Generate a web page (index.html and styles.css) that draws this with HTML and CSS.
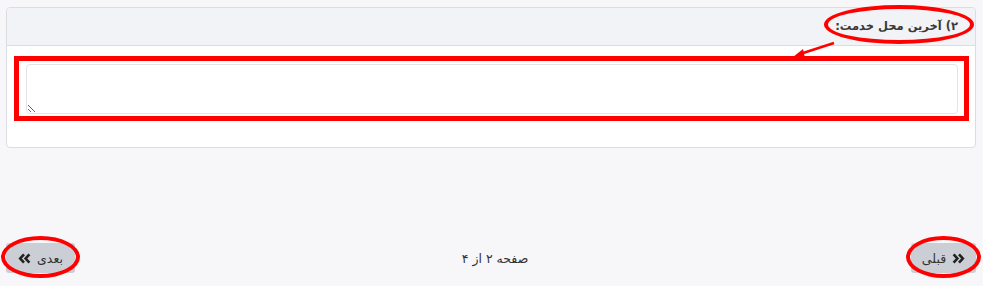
FILE: index.html
```html
<!DOCTYPE html>
<html lang="fa" dir="rtl">
<head>
<meta charset="utf-8">
<link rel="stylesheet" href="styles.css">
</head>
<body>
<div class="page">
  <div class="card">
    <div class="card-header">
      <span class="title">۲) آخرین محل خدمت:</span>
      <span class="ring ring-title"></span>
      <svg class="arrow" width="50" height="22" viewBox="0 0 50 22"><line x1="44" y1="4" x2="10" y2="15" stroke="#ff0000" stroke-width="2.5"/><polygon points="3,18 13,10 15,19" fill="#ff0000"/></svg>
    </div>
    <div class="card-body">
      <div class="highlight">
        <textarea class="field"></textarea>
      </div>
    </div>
  </div>
  <div class="footer">
    <button class="btn btn-prev">
      <svg class="chev" width="13" height="11" viewBox="0 0 13 11"><path d="M1.6 1.3 L5.4 5.5 L1.6 9.7 M7 1.3 L10.8 5.5 L7 9.7" fill="none" stroke="#222" stroke-width="2.6"/></svg>
      <span>قبلی</span>
      <span class="ring ring-btn"></span>
    </button>
    <span class="pager">صفحه ۲ از ۴</span>
    <button class="btn btn-next">
      <span>بعدی</span>
      <svg class="chev" width="13" height="11" viewBox="0 0 13 11"><path d="M11.4 1.3 L7.6 5.5 L11.4 9.7 M6 1.3 L2.2 5.5 L6 9.7" fill="none" stroke="#222" stroke-width="2.6"/></svg>
      <span class="ring ring-btn"></span>
    </button>
  </div>
</div>
</body>
</html>
```
FILE: styles.css
```css
html, body {
  margin: 0;
  padding: 0;
}
body {
  background: #f7f7f9;
  font-family: "DejaVu Sans", sans-serif;
  color: #333;
  width: 983px;
  height: 286px;
  overflow: hidden;
}
.page {
  padding: 7px 7px 0 6px;
}
.card {
  background: #fff;
  border: 1px solid #dadde2;
  border-radius: 4px;
  height: 139px;
}
.card-header {
  position: relative;
  height: 37px;
  background: #f1f3f6;
  border-bottom: 1px solid #dadde2;
  border-radius: 4px 4px 0 0;
  display: flex;
  align-items: center;
  padding-right: 17px;
}
.title {
  font-size: 11.5px;
  font-weight: bold;
  color: #3a3a3a;
  margin-top: -1px;
}
.ring {
  position: absolute;
  border: 4px solid #ff0000;
  border-radius: 50%;
  box-sizing: border-box;
  pointer-events: none;
}
.ring-title {
  right: 1px;
  top: -3px;
  width: 150px;
  height: 39px;
}
.arrow {
  position: absolute;
  right: 135px;
  top: 31px;
}
.card-body {
  padding: 10px 6px 0 7px;
}
.highlight {
  border: 5px solid #ff0000;
  padding: 3px 6px 2px 7px;
}
.field {
  display: block;
  box-sizing: border-box;
  width: 100%;
  height: 50px;
  margin: 0;
  border: 1px solid #e2e4e8;
  border-radius: 4px;
  background: #fff;
  resize: vertical;
  font-family: inherit;
}
.footer {
  margin-top: 95px;
  display: flex;
  justify-content: space-between;
  align-items: center;
}
.btn {
  position: relative;
  height: 30px;
  border: none;
  border-radius: 3px;
  background: #cbcfd5;
  color: #333;
  font-family: "DejaVu Sans", sans-serif;
  font-size: 12.5px;
  display: flex;
  align-items: center;
  justify-content: center;
  gap: 6px;
  padding: 0;
  overflow: visible;
}
.btn-prev {
  width: 65px;
}
.btn-next {
  width: 69px;
}
.ring-btn {
  top: -7px;
  left: -5px;
  right: -5px;
  bottom: -5px;
}
.pager {
  font-size: 12.5px;
  color: #333;
  margin-left: 4px;
}
```
